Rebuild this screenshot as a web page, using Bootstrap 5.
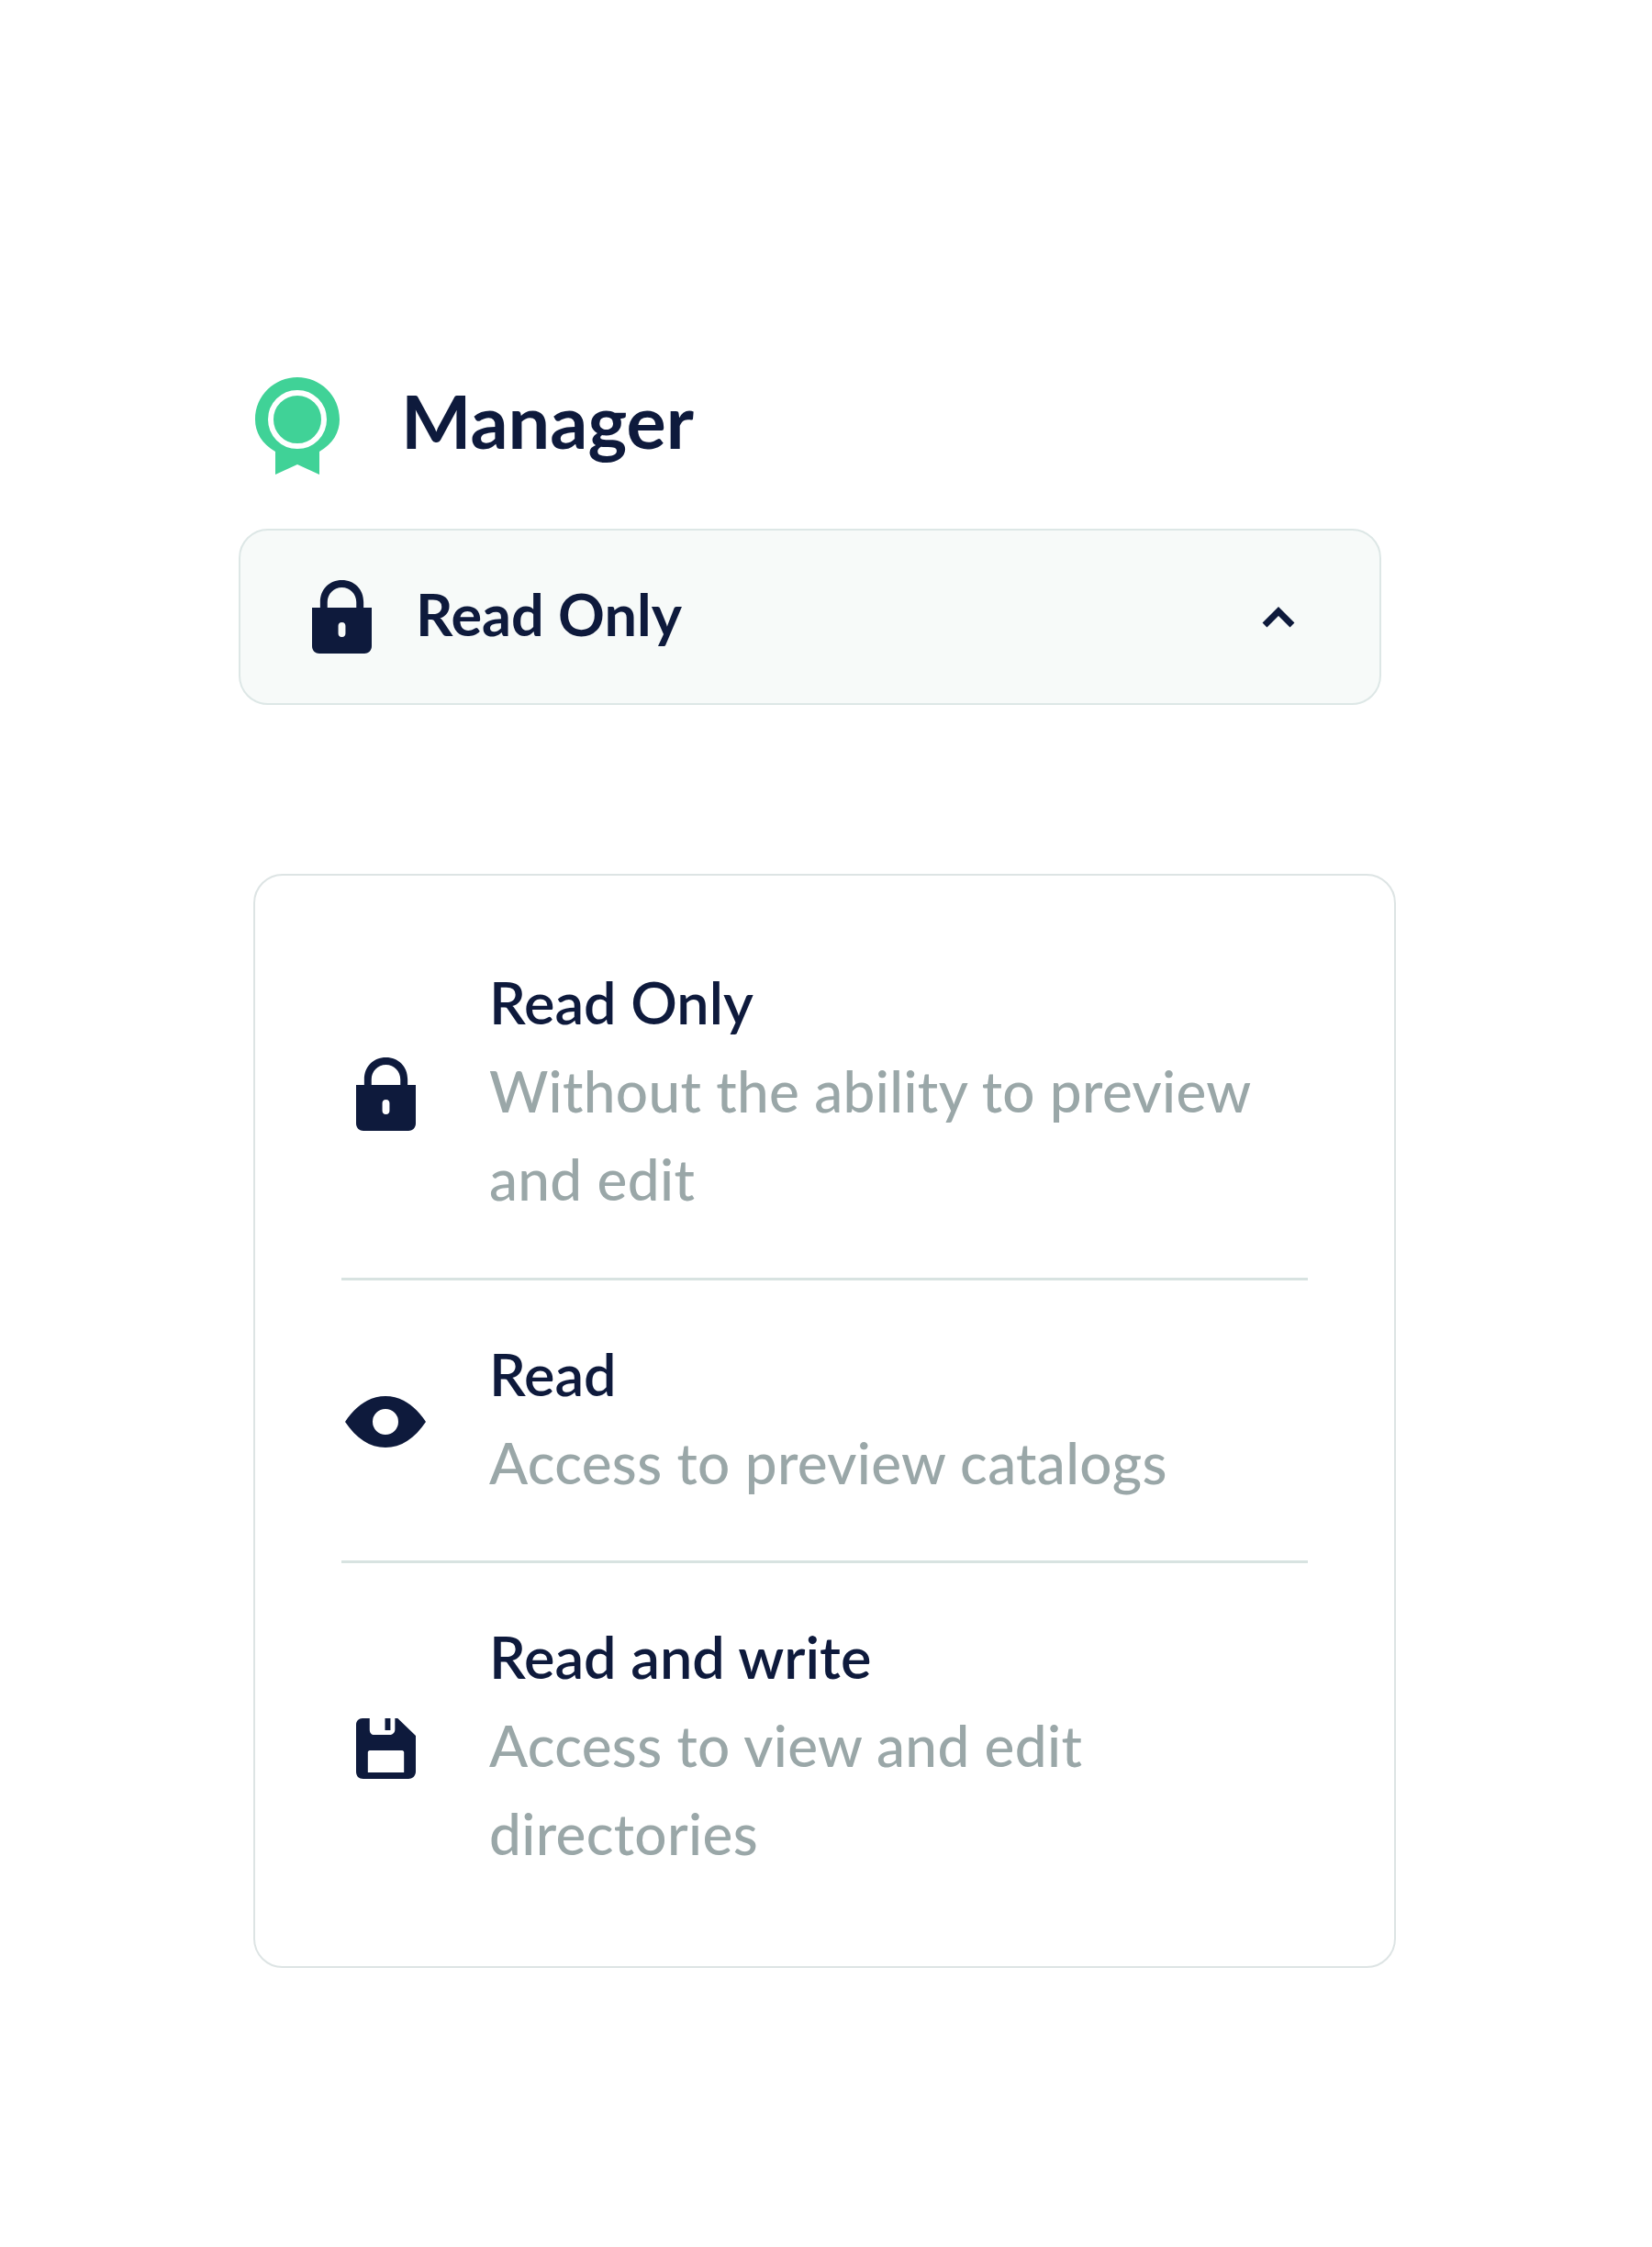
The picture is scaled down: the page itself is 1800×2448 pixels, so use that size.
<!DOCTYPE html>
<html lang="en"><head><meta charset="utf-8"><title>Manager role</title>
<link href="https://cdn.jsdelivr.net/npm/bootstrap@5.3.0/dist/css/bootstrap.min.css" rel="stylesheet">
<style>
html,body{height:100%}
body{font-family:Lato,"Liberation Sans",sans-serif;color:#0e1a3c;background:#fff;padding:411px 0 0 260px}
.role-head{margin-left:18px;height:106px;gap:67px}
.role-title{font-size:81px;font-weight:700;line-height:1;padding-bottom:14px}
.role-select{width:1245px;height:192px;margin-top:59px;background:#f7faf9;border:2px solid #dde7e6;border-radius:32px;padding:0 92px 0 78px}
.role-select-gap{gap:48px}
.role-select-label{font-size:63px;font-weight:700;line-height:1;padding-bottom:7px}
.role-panel{width:1245px;margin:184px 0 0 16px;border:2px solid #dde4e4;border-radius:32px;padding:90px 94px 97px}
.role-row{gap:65px;padding:54px 0 59px;border-bottom:3px solid #d8e3e1}
.role-row:first-child{padding-top:0;padding-bottom:60px}
.role-row:last-child{border-bottom:0;padding-bottom:0}
.role-icon{width:96px;flex:none;padding-top:7px}
.role-name{font-size:63px;font-weight:600;line-height:96px}
.role-desc{font-size:62px;line-height:96px;color:#9aa7a8;font-weight:500;letter-spacing:.35px}
</style></head><body>
<div class="d-flex align-items-center role-head">
<svg width="92" height="106" viewBox="0 0 92 106"><path fill="#40d297" d="M46 0C71 0 92 20 92 46 92 60 85 72 70 81V106L46 95 22 106V81C7 72 0 60 0 46 0 20 21 0 46 0Z"/><circle cx="46" cy="46" r="29" fill="none" stroke="#fff" stroke-width="6"/></svg>
<span class="role-title">Manager</span>
</div>
<div class="d-flex align-items-center justify-content-between role-select">
<div class="d-flex align-items-center role-select-gap">
<svg width="65" height="80" viewBox="0 0 66 80" preserveAspectRatio="none"><path fill="#0e1a3c" fill-rule="evenodd" d="M9 30V24C9 10 19 0 33 0S57 10 57 24V30H66V72C66 77 62 80 58 80H8C4 80 0 77 0 72V30ZM17 30H49V24C49 15 42 8 33 8S17 15 17 24ZM33 46C30 46 29 48 29 50V58C29 60 30 62 33 62S37 60 37 58V50C37 48 36 46 33 46Z"/></svg>
<span class="role-select-label">Read Only</span>
</div>
<svg width="36" height="24" viewBox="0 0 36 24"><path fill="none" stroke="#0e1a3c" stroke-width="7" d="M3 21 18 6 33 21"/></svg>
</div>
<div class="role-panel">
<div class="d-flex align-items-center role-row">
<div class="role-icon text-center"><svg width="65" height="80" viewBox="0 0 66 80" preserveAspectRatio="none"><path fill="#0e1a3c" fill-rule="evenodd" d="M9 30V24C9 10 19 0 33 0S57 10 57 24V30H66V72C66 77 62 80 58 80H8C4 80 0 77 0 72V30ZM17 30H49V24C49 15 42 8 33 8S17 15 17 24ZM33 46C30 46 29 48 29 50V58C29 60 30 62 33 62S37 60 37 58V50C37 48 36 46 33 46Z"/></svg></div>
<div><div class="role-name">Read Only</div><div class="role-desc">Without the ability to preview and edit</div></div>
</div>
<div class="d-flex align-items-center role-row">
<div class="role-icon text-center"><svg width="88" height="56" viewBox="0 0 88 56"><path fill="#0e1a3c" fill-rule="evenodd" d="M0 28C12 10 27 0 44 0S76 10 88 28C76 46 61 56 44 56S12 46 0 28ZM44 14A14 14 0 1 0 44 42 14 14 0 1 0 44 14Z"/></svg></div>
<div><div class="role-name">Read</div><div class="role-desc">Access to preview catalogs</div></div>
</div>
<div class="d-flex align-items-center role-row">
<div class="role-icon text-center"><svg width="65" height="66" viewBox="0 0 66 66" preserveAspectRatio="none"><path fill="#0e1a3c" fill-rule="evenodd" d="M7 0H15V12C15 16 17 18 20 18H37C40 18 43 16 43 12V0H46L66 19V58C66 63 62 66 58 66H8C3 66 0 63 0 58V7C0 3 3 0 7 0ZM13 37C13 36 14 35 15 35H51C52 35 53 36 53 37V59H13ZM32 0H38V13H32Z"/></svg></div>
<div><div class="role-name">Read and write</div><div class="role-desc">Access to view and edit directories</div></div>
</div>
</div>
<script src="https://cdn.jsdelivr.net/npm/bootstrap@5.3.0/dist/js/bootstrap.bundle.min.js"></script>
</body></html>
